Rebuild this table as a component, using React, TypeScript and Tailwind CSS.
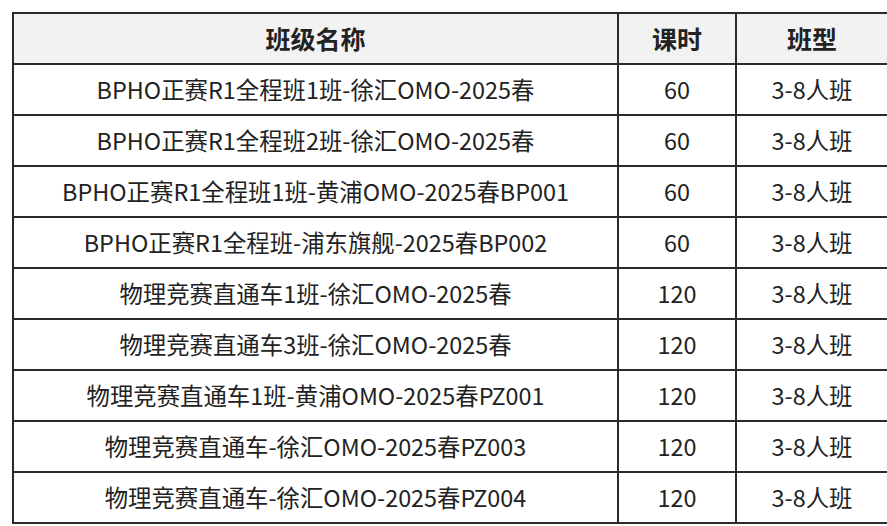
const rows: [string, number, string][] = [
  ['BPHO正赛R1全程班1班-徐汇OMO-2025春', 60, '3-8人班'],
  ['BPHO正赛R1全程班2班-徐汇OMO-2025春', 60, '3-8人班'],
  ['BPHO正赛R1全程班1班-黄浦OMO-2025春BP001', 60, '3-8人班'],
  ['BPHO正赛R1全程班-浦东旗舰-2025春BP002', 60, '3-8人班'],
  ['物理竞赛直通车1班-徐汇OMO-2025春', 120, '3-8人班'],
  ['物理竞赛直通车3班-徐汇OMO-2025春', 120, '3-8人班'],
  ['物理竞赛直通车1班-黄浦OMO-2025春PZ001', 120, '3-8人班'],
  ['物理竞赛直通车-徐汇OMO-2025春PZ003', 120, '3-8人班'],
  ['物理竞赛直通车-徐汇OMO-2025春PZ004', 120, '3-8人班'],
];

export default function App() {
  return (
    <div
      className="w-[887px] h-[526px] overflow-hidden bg-white pl-[12px] pt-[12px] text-[#222]"
      style={{ fontFamily: '"Noto Sans CJK SC", "Noto Sans", sans-serif' }}
    >
      <table className="border-collapse table-fixed w-[875px]">
        <colgroup>
          <col className="w-[605px]" />
          <col className="w-[118px]" />
          <col className="w-[152px]" />
        </colgroup>
        <thead>
          <tr className="h-[51px] bg-[#f2f2f2]">
            <th className="border-2 border-[#2a2a2a] text-[25px] font-bold text-center">班级名称</th>
            <th className="border-2 border-[#2a2a2a] text-[25px] font-bold text-center">课时</th>
            <th className="border-2 border-[#2a2a2a] text-[25px] font-bold text-center">班型</th>
          </tr>
        </thead>
        <tbody>
          {rows.map((r, i) => (
            <tr key={i} className="h-[51px]">
              <td className="border-2 border-[#2a2a2a] text-[23.4px] text-center whitespace-nowrap">{r[0]}</td>
              <td className="border-2 border-[#2a2a2a] text-[23.4px] text-center">{r[1]}</td>
              <td className="border-2 border-[#2a2a2a] text-[23.4px] text-center">{r[2]}</td>
            </tr>
          ))}
        </tbody>
      </table>
    </div>
  );
}
